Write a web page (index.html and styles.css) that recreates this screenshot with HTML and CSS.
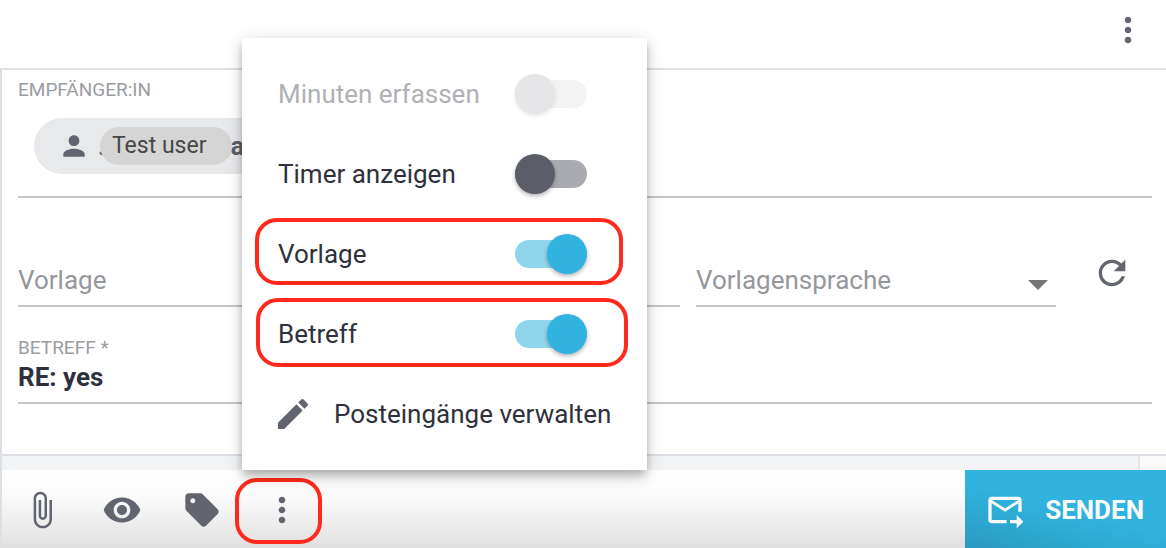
FILE: index.html
```html
<!DOCTYPE html>
<html lang="de">
<head>
<meta charset="utf-8">
<meta name="viewport" content="width=device-width, initial-scale=1">
<title>Nachricht</title>
<link rel="stylesheet" href="styles.css">
</head>
<body>
<header class="topbar">
  <button class="icon-button" type="button" aria-label="Weitere Optionen">
    <svg class="icon" viewBox="0 0 24 24"><path d="M12 8c1.1 0 2-.9 2-2s-.9-2-2-2-2 .9-2 2 .9 2 2 2zm0 2c-1.1 0-2 .9-2 2s.9 2 2 2 2-.9 2-2-.9-2-2-2zm0 6c-1.1 0-2 .9-2 2s.9 2 2 2 2-.9 2-2-.9-2-2-2z"/></svg>
  </button>
</header>

<main class="composer">
  <form class="form" id="message">
    <section class="recipients">
      <h2 class="label">EMPFÄNGER:IN</h2>
      <div class="chip">
        <svg class="chip-icon" viewBox="0 0 24 24"><path d="M12 12c2.21 0 4-1.79 4-4s-1.79-4-4-4-4 1.79-4 4 1.79 4 4 4zm0 2c-2.67 0-8 1.34-8 4v2h16v-2c0-2.66-5.33-4-8-4z"/></svg>
        <span class="chip-address chip-start">.</span>
        <span class="chip-name">Test user</span>
        <span class="chip-address">a</span>
      </div>
    </section>

    <div class="template-row">
      <input class="field template" type="text" placeholder="Vorlage" aria-label="Vorlage">
      <div class="language">
        <select class="field" aria-label="Vorlagensprache"><option>Vorlagensprache</option></select>
        <svg class="caret" viewBox="0 0 20 10"><path d="M0 0h20L10 10z"/></svg>
      </div>
      <button class="icon-button refresh" type="button" aria-label="Aktualisieren">
        <svg class="icon" viewBox="0 0 24 24"><path d="M17.65 6.35C16.2 4.9 14.21 4 12 4c-4.42 0-7.99 3.58-7.99 8s3.57 8 7.99 8c3.73 0 6.84-2.55 7.73-6h-2.08c-.82 2.33-3.04 4-5.65 4-3.31 0-6-2.69-6-6s2.69-6 6-6c1.66 0 3.14.69 4.22 1.78L13 11h7V4l-2.35 2.35z"/></svg>
      </button>
    </div>

    <div class="subject">
      <label class="label" for="subject">BETREFF *</label>
      <input class="field subject-input" id="subject" type="text" value="RE: yes" required>
    </div>
  </form>

  <div class="strip"><div class="strip-end"></div></div>

  <footer class="toolbar">
    <button class="icon-button" type="button" aria-label="Datei anhängen">
      <svg class="icon" viewBox="0 0 24 24"><path d="M16.5 6v11.5c0 2.21-1.79 4-4 4s-4-1.79-4-4V5c0-1.38 1.12-2.5 2.5-2.5s2.5 1.12 2.5 2.5v10.5c0 .55-.45 1-1 1s-1-.45-1-1V6H10v9.5c0 1.38 1.12 2.5 2.5 2.5s2.5-1.12 2.5-2.5V5c0-2.21-1.79-4-4-4S7 2.79 7 5v12.5c0 3.04 2.46 5.5 5.5 5.5s5.5-2.46 5.5-5.5V6h-1.5z"/></svg>
    </button>
    <button class="icon-button" type="button" aria-label="Vorschau">
      <svg class="icon" viewBox="0 0 24 24"><path d="M12 4.5C7 4.5 2.73 7.61 1 12c1.73 4.39 6 7.5 11 7.5s9.27-3.11 11-7.5c-1.73-4.39-6-7.5-11-7.5zM12 17c-2.76 0-5-2.24-5-5s2.24-5 5-5 5 2.24 5 5-2.24 5-5 5zm0-8c-1.66 0-3 1.34-3 3s1.34 3 3 3 3-1.34 3-3-1.34-3-3-3z"/></svg>
    </button>
    <button class="icon-button" type="button" aria-label="Schlagwort">
      <svg class="icon" viewBox="0 0 24 24"><path d="M21.41 11.58l-9-9C12.05 2.22 11.55 2 11 2H4c-1.1 0-2 .9-2 2v7c0 .55.22 1.05.59 1.42l9 9c.36.36.86.58 1.41.58.55 0 1.05-.22 1.41-.59l7-7c.37-.36.59-.86.59-1.41 0-.55-.23-1.06-.59-1.42zM6.5 8C5.67 8 5 7.33 5 6.5S5.67 5 6.5 5 8 5.67 8 6.5 7.33 8 6.5 8z"/></svg>
    </button>
    <div class="more">
      <button class="icon-button" type="button" aria-label="Mehr" aria-expanded="true">
        <svg class="icon" viewBox="0 0 24 24"><path d="M12 8c1.1 0 2-.9 2-2s-.9-2-2-2-2 .9-2 2 .9 2 2 2zm0 2c-1.1 0-2 .9-2 2s.9 2 2 2 2-.9 2-2-.9-2-2-2zm0 6c-1.1 0-2 .9-2 2s.9 2 2 2 2-.9 2-2-.9-2-2-2z"/></svg>
      </button>
      <span class="highlight highlight-more"></span>
      <div class="menu">
        <label class="menu-item disabled">Minuten erfassen<input class="switch" type="checkbox" disabled></label>
        <label class="menu-item">Timer anzeigen<input class="switch" type="checkbox"></label>
        <label class="menu-item">Vorlage<input class="switch" type="checkbox" checked><span class="highlight highlight-template"></span></label>
        <label class="menu-item">Betreff<input class="switch" type="checkbox" checked><span class="highlight highlight-subject"></span></label>
        <button class="menu-item menu-action" type="button">
          <svg class="pencil" viewBox="3 3 18 18"><path d="M3 17.25V21h3.75L17.81 9.94l-3.75-3.75L3 17.25zM20.71 7.04c.39-.39.39-1.02 0-1.41l-2.34-2.34c-.39-.39-1.02-.39-1.41 0l-1.83 1.83 3.75 3.75 1.83-1.83z"/></svg>
          Posteingänge verwalten
        </button>
      </div>
    </div>
    <button class="send" type="submit" form="message">
      <svg class="icon" viewBox="0 0 24 24"><path d="M20 4H4c-1.1 0-2 .9-2 2v12c0 1.1.9 2 2 2h9v-2H4V8l8 5 8-5v5h2V6c0-1.1-.9-2-2-2zm-8 7L4 6h16l-8 5zm7 4l4 4-4 4v-3h-4v-2h4v-3z"/></svg>
      SENDEN
    </button>
  </footer>
</main>
</body>
</html>
```

FILE: styles.css
```css
* {
  box-sizing: border-box;
}

body {
  margin: 0;
  min-height: 100vh;
  display: flex;
  flex-direction: column;
  background: #fff;
  color: #2e313d;
  font-family: Roboto, "Liberation Sans", sans-serif;
  font-size: 26px;
  line-height: 32px;
}

button,
input,
select {
  margin: 0;
  padding: 0;
  border: 0;
  border-radius: 0;
  background: none;
  color: inherit;
  font: inherit;
  outline: 0;
}

button {
  cursor: pointer;
}

.icon {
  display: block;
  width: 40px;
  height: 40px;
  fill: currentColor;
}

.icon-button {
  display: flex;
  align-items: center;
  justify-content: center;
  width: 80px;
  height: 80px;
  color: #62656f;
}

.topbar {
  display: flex;
  justify-content: flex-end;
  align-items: center;
  height: 70px;
  padding-bottom: 8px;
  border-bottom: 2px solid #dcdfe3;
}

.topbar .icon-button {
  width: 76px;
  height: 60px;
}

.composer {
  flex: 1;
  display: flex;
  flex-direction: column;
  border-left: 2px solid #dcdfe3;
}

.form {
  flex: 1;
  padding: 8px 14px 50px 16px;
}

.label {
  display: block;
  margin: 0;
  color: #9a9ca2;
  font-size: 19px;
  font-weight: 400;
  line-height: 23px;
}

.recipients {
  padding-bottom: 22px;
  border-bottom: 2px solid #c5c5cb;
}

.chip {
  display: flex;
  align-items: center;
  width: fit-content;
  height: 56px;
  margin: 17px 0 0 16px;
  padding: 0 28px 0 24px;
  border-radius: 28px;
  background: #e8e9eb;
}

.chip-icon {
  width: 32px;
  height: 32px;
  fill: #62656f;
}

.chip-name {
  z-index: 1;
  padding: 3px 26px 3px 12px;
  border-radius: 19px;
  background: #d5d5d5;
  color: #474747;
  font-size: 23px;
}

.chip-address {
  color: #5c5f6b;
  font-weight: 700;
}

.chip-start {
  width: 2px;
  margin-left: 8px;
}

.chip-name + .chip-address {
  margin-left: -2px;
}

.field {
  display: block;
  width: 100%;
  height: 43px;
  padding-bottom: 9px;
  border-bottom: 2px solid #c5c5cb;
  line-height: 32px;
}

.template-row {
  display: flex;
  align-items: center;
  gap: 16px;
  margin-top: 66px;
}

.template {
  flex: 1;
  min-width: 0;
}

.template::placeholder {
  color: #95979c;
  opacity: 1;
}

.language {
  display: grid;
  width: 360px;
}

.language .field,
.caret {
  grid-area: 1 / 1;
}

.language .field {
  appearance: none;
  color: #95979c;
}

.caret {
  width: 20px;
  height: 10px;
  margin: 16px 8px 0 0;
  justify-self: end;
  fill: #757575;
  pointer-events: none;
}

.refresh {
  height: 40px;
  align-self: flex-start;
  margin-top: -11px;
}

.subject {
  margin-top: 29px;
}

.subject-input {
  margin-top: 2px;
  font-weight: 700;
}

.strip {
  display: flex;
  justify-content: flex-end;
  height: 16px;
  border-top: 2px solid #dcdfe3;
  background: #f2f3f5;
}

.strip-end {
  width: 28px;
  border-left: 2px solid #e6e6e6;
  background: #fafafa;
}

.toolbar {
  display: flex;
  height: 78px;
  background: linear-gradient(#fff, #fafafa 35%, #e0e0e0);
}

.more {
  position: relative;
}

.send {
  display: flex;
  align-items: center;
  gap: 20px;
  margin-left: auto;
  padding: 2px 22px 0 20px;
  background: linear-gradient(15deg, #2a9ac1, #30b3df 50%);
  color: #fafafa;
  font-weight: 700;
}

.menu {
  position: absolute;
  z-index: 2;
  bottom: 100%;
  left: 0;
  padding: 16px 0;
  background: #fff;
  box-shadow: 0 4px 8px -2px rgba(0, 0, 0, 0.2),
    0 8px 10px 0 rgba(0, 0, 0, 0.14),
    0 2px 20px 0 rgba(0, 0, 0, 0.12);
}

.menu-item {
  position: relative;
  display: flex;
  align-items: center;
  justify-content: space-between;
  height: 80px;
  padding: 0 60px 0 36px;
  white-space: nowrap;
}

.menu-item.disabled {
  color: #b0b1b4;
}

.menu-action {
  justify-content: flex-start;
  gap: 26px;
  padding-right: 36px;
}

.pencil {
  width: 30px;
  height: 30px;
  fill: #62656f;
}

.switch {
  appearance: none;
  display: flex;
  align-items: center;
  width: 72px;
  height: 28px;
  border-radius: 14px;
  background: #aaabb1;
}

.switch::before {
  content: "";
  width: 40px;
  height: 40px;
  border-radius: 50%;
  background: #5b5e68;
  box-shadow: 0 2px 4px rgba(0, 0, 0, 0.3);
}

.switch:checked {
  justify-content: flex-end;
  background: #8fd6ec;
}

.switch:checked::before {
  background: #30b3df;
}

.switch:disabled {
  background: #f3f3f3;
}

.switch:disabled::before {
  background: #e6e6e8;
  box-shadow: 0 2px 4px rgba(0, 0, 0, 0.1);
}

.highlight {
  position: absolute;
  border: 4px solid #ff2a1c;
  border-radius: 22px;
  pointer-events: none;
}

.highlight-more {
  inset: 8px 0 4px -7px;
}

.highlight-template {
  inset: 4px 24px 9px 13px;
}

.highlight-subject {
  inset: 4px 19px 7px 14px;
}
```
